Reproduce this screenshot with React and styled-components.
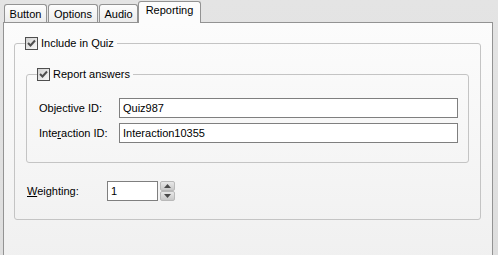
import React from 'react';
import styled, {createGlobalStyle} from "styled-components";

const GlobalStyle = createGlobalStyle`
    html, body {
        margin: 0;
        padding: 0;
        background: #e2e2e2;
    }
    * {
        box-sizing: border-box;
    }
`;

const Dialog = styled.div`
    width: 498px;
    height: 255px;
    overflow: hidden;
    background: linear-gradient(#e4e4e4, #dedede);
    font-family: "Liberation Sans", Arial, sans-serif;
    font-size: 11px;
    color: #000000;
`;

const TabStrip = styled.div`
    display: flex;
    align-items: flex-end;
    height: 22px;
    padding: 0 0 0 4px;
    gap: 1px;
    position: relative;
    z-index: 1;
`;

const Tab = styled.div`
    width: ${p => p.$width}px;
    height: ${p => (p.$active ? '22px' : '18px')};
    padding-top: ${p => (p.$active ? '2px' : '3px')};
    margin-left: ${p => (p.$active ? '-1px' : '0')};
    margin-bottom: ${p => (p.$active ? '-1px' : '0')};
    border: 1px solid #939393;
    border-bottom: none;
    border-radius: 3px 3px 0 0;
    background: ${p => (p.$active ? '#fcfcfc' : 'linear-gradient(#fdfdfd, #ececec)')};
    line-height: 13px;
    text-align: center;
    white-space: nowrap;
`;

const Panel = styled.div`
    margin: 0 0 0 3px;
    width: 490px;
    height: 240px;
    border: 1px solid #939393;
    border-bottom: none;
    background: linear-gradient(#fcfcfc, #f0f0f0);
    padding: 14px 0 0 10px;
`;

const Group = styled.fieldset`
    margin: ${p => p.$margin || '0'};
    width: ${p => p.$width}px;
    border: 1px solid #c4c4c4;
    border-radius: 3px;
    padding: ${p => p.$padding};
    min-width: 0;
`;

const Legend = styled.legend`
    margin-left: ${p => p.$indent}px;
    padding: 0 3px 0 0;
    display: flex;
    align-items: center;
    gap: 3px;
    line-height: 13px;
`;

const CheckBox = styled.span`
    width: 13px;
    height: 13px;
    border: 1px solid #4f4f4f;
    background: linear-gradient(135deg, #d2d2d2, #f8f8f8);
    display: flex;
    align-items: center;
    justify-content: center;
`;

const Check = () => (
    <CheckBox>
        <svg width="9" height="9" viewBox="0 0 9 9">
            <path d="M1 4 L3.5 6.5 L8 1.5" stroke="#4e4e4e" strokeWidth="2" fill="none"/>
        </svg>
    </CheckBox>
);

const Row = styled.div`
    display: flex;
    align-items: center;
    margin: ${p => p.$margin || '0'};
`;

const Label = styled.span`
    width: 80px;
    flex-shrink: 0;
`;

const Key = styled.span`
    text-decoration: underline;
`;

const Input = styled.div`
    width: ${p => p.$width}px;
    height: 20px;
    border: 1px solid #7f7f7f;
    background: #ffffff;
    padding: 0 0 0 3px;
    line-height: 18px;
`;

const Spin = styled.div`
    display: flex;
    flex-direction: column;
    margin-left: 2px;
`;

const SpinButton = styled.div`
    width: 15px;
    height: 10px;
    border: 1px solid #b9b9b9;
    border-radius: 2px;
    background: linear-gradient(#e8e8e8, #c8c8c8);
    display: flex;
    align-items: center;
    justify-content: center;
`;

const Arrow = ({up}) => (
    <svg width="7" height="4" viewBox="0 0 7 4">
        <path d={up ? "M0 4 L3.5 0 L7 4 Z" : "M0 0 L3.5 4 L7 0 Z"} fill="#4a4a4a"/>
    </svg>
);

const App = () => {
    return (
        <Dialog>
            <GlobalStyle/>
            <TabStrip>
                <Tab $width={43}>Button</Tab>
                <Tab $width={50}>Options</Tab>
                <Tab $width={39}>Audio</Tab>
                <Tab $width={63} $active>Reporting</Tab>
            </TabStrip>
            <Panel>
                <Group $width={467} $padding="18px 11px 18px 11px">
                    <Legend $indent={-1}><Check/>Include in Quiz</Legend>
                    <Group $width={443} $padding="17px 10px 19px 12px">
                        <Legend $indent={-2}><Check/>Report answers</Legend>
                        <Row>
                            <Label>Objective ID:</Label>
                            <Input $width={339}>Quiz987</Input>
                        </Row>
                        <Row $margin="5px 0 0 0">
                            <Label>Inte<Key>r</Key>action ID:</Label>
                            <Input $width={339}>Interaction10355</Input>
                        </Row>
                    </Group>
                    <Row $margin="18px 0 0 1px">
                        <Label><Key>W</Key>eighting:</Label>
                        <Input $width={51}>1</Input>
                        <Spin>
                            <SpinButton><Arrow up/></SpinButton>
                            <SpinButton><Arrow/></SpinButton>
                        </Spin>
                    </Row>
                </Group>
            </Panel>
        </Dialog>
    );
};

export default App;
